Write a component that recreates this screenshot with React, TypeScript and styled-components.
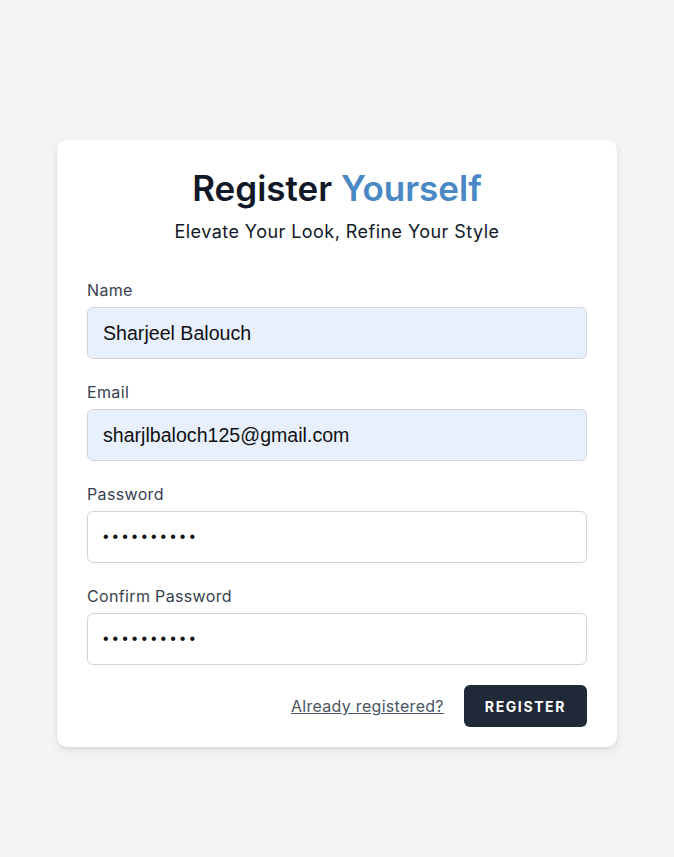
import styled, { createGlobalStyle } from 'styled-components';

const GlobalStyle = createGlobalStyle`
  body {
    margin: 0;
    background: #f3f4f6;
    font-family: Inter, "Noto Sans", sans-serif;
  }
`;

const Page = styled.div`
  min-height: 857px;
  display: flex;
  justify-content: center;
  padding-top: 140px;
  box-sizing: border-box;
`;

const Card = styled.form`
  width: 560px;
  height: 607px;
  box-sizing: border-box;
  background: #fff;
  border-radius: 10px;
  box-shadow: 0 4px 8px rgba(0, 0, 0, 0.08), 0 1px 3px rgba(0, 0, 0, 0.06);
  padding: 28px 30px 20px;
  display: flex;
  flex-direction: column;
`;

const Title = styled.h1`
  margin: 0;
  font-size: 35px;
  line-height: 40px;
  font-weight: 600;
  text-align: center;
  color: #111827;
  letter-spacing: 0;
`;

const Accent = styled.span`
  color: #4a88c5;
`;

const Subtitle = styled.p`
  margin: 10px 0 32px;
  font-size: 18px;
  line-height: 28px;
  text-align: center;
  color: #111827;
  letter-spacing: 0.45px;
`;

const Field = styled.div`
  display: flex;
  flex-direction: column;
  gap: 5px;
  margin-bottom: 21px;
`;

const Label = styled.label`
  font-size: 16px;
  line-height: 24px;
  color: #374151;
  letter-spacing: 0.35px;
`;

const Input = styled.input<{ $filled?: boolean }>`
  height: 52px;
  box-sizing: border-box;
  border: 1px solid #d1d5db;
  border-radius: 6px;
  padding: 0 15px;
  background: ${p => (p.$filled ? '#e8f0fe' : '#fff')};
  font-family: "Liberation Sans", Arial, sans-serif;
  font-size: ${p => (p.type === 'password' ? '16px' : '19.6px')};
  color: #111;
  outline: none;
  letter-spacing: ${p => (p.type === 'password' ? '4px' : '0')};
`;

const Actions = styled.div`
  display: flex;
  justify-content: flex-end;
  align-items: center;
  gap: 20px;
  margin-top: -1px;
`;

const LoginLink = styled.a`
  font-size: 16px;
  color: #4b5563;
  text-decoration: underline;
  letter-spacing: 0.3px;
  cursor: pointer;
`;

const Button = styled.button`
  height: 42px;
  padding: 0 21px;
  border: none;
  border-radius: 6px;
  background: #1f2937;
  color: #fff;
  font-family: Inter, sans-serif;
  font-size: 14px;
  font-weight: 700;
  letter-spacing: 1.6px;
  text-transform: uppercase;
`;

export default function App() {
  return (
    <>
      <GlobalStyle />
      <Page>
        <Card onSubmit={e => e.preventDefault()}>
          <Title>
            Register <Accent>Yourself</Accent>
          </Title>
          <Subtitle>Elevate Your Look, Refine Your Style</Subtitle>
          <Field>
            <Label>Name</Label>
            <Input $filled defaultValue="Sharjeel Balouch" />
          </Field>
          <Field>
            <Label>Email</Label>
            <Input $filled defaultValue="sharjlbaloch125@gmail.com" />
          </Field>
          <Field>
            <Label>Password</Label>
            <Input type="password" defaultValue="1234567890" />
          </Field>
          <Field>
            <Label>Confirm Password</Label>
            <Input type="password" defaultValue="1234567890" />
          </Field>
          <Actions>
            <LoginLink>Already registered?</LoginLink>
            <Button type="submit">Register</Button>
          </Actions>
        </Card>
      </Page>
    </>
  );
}
